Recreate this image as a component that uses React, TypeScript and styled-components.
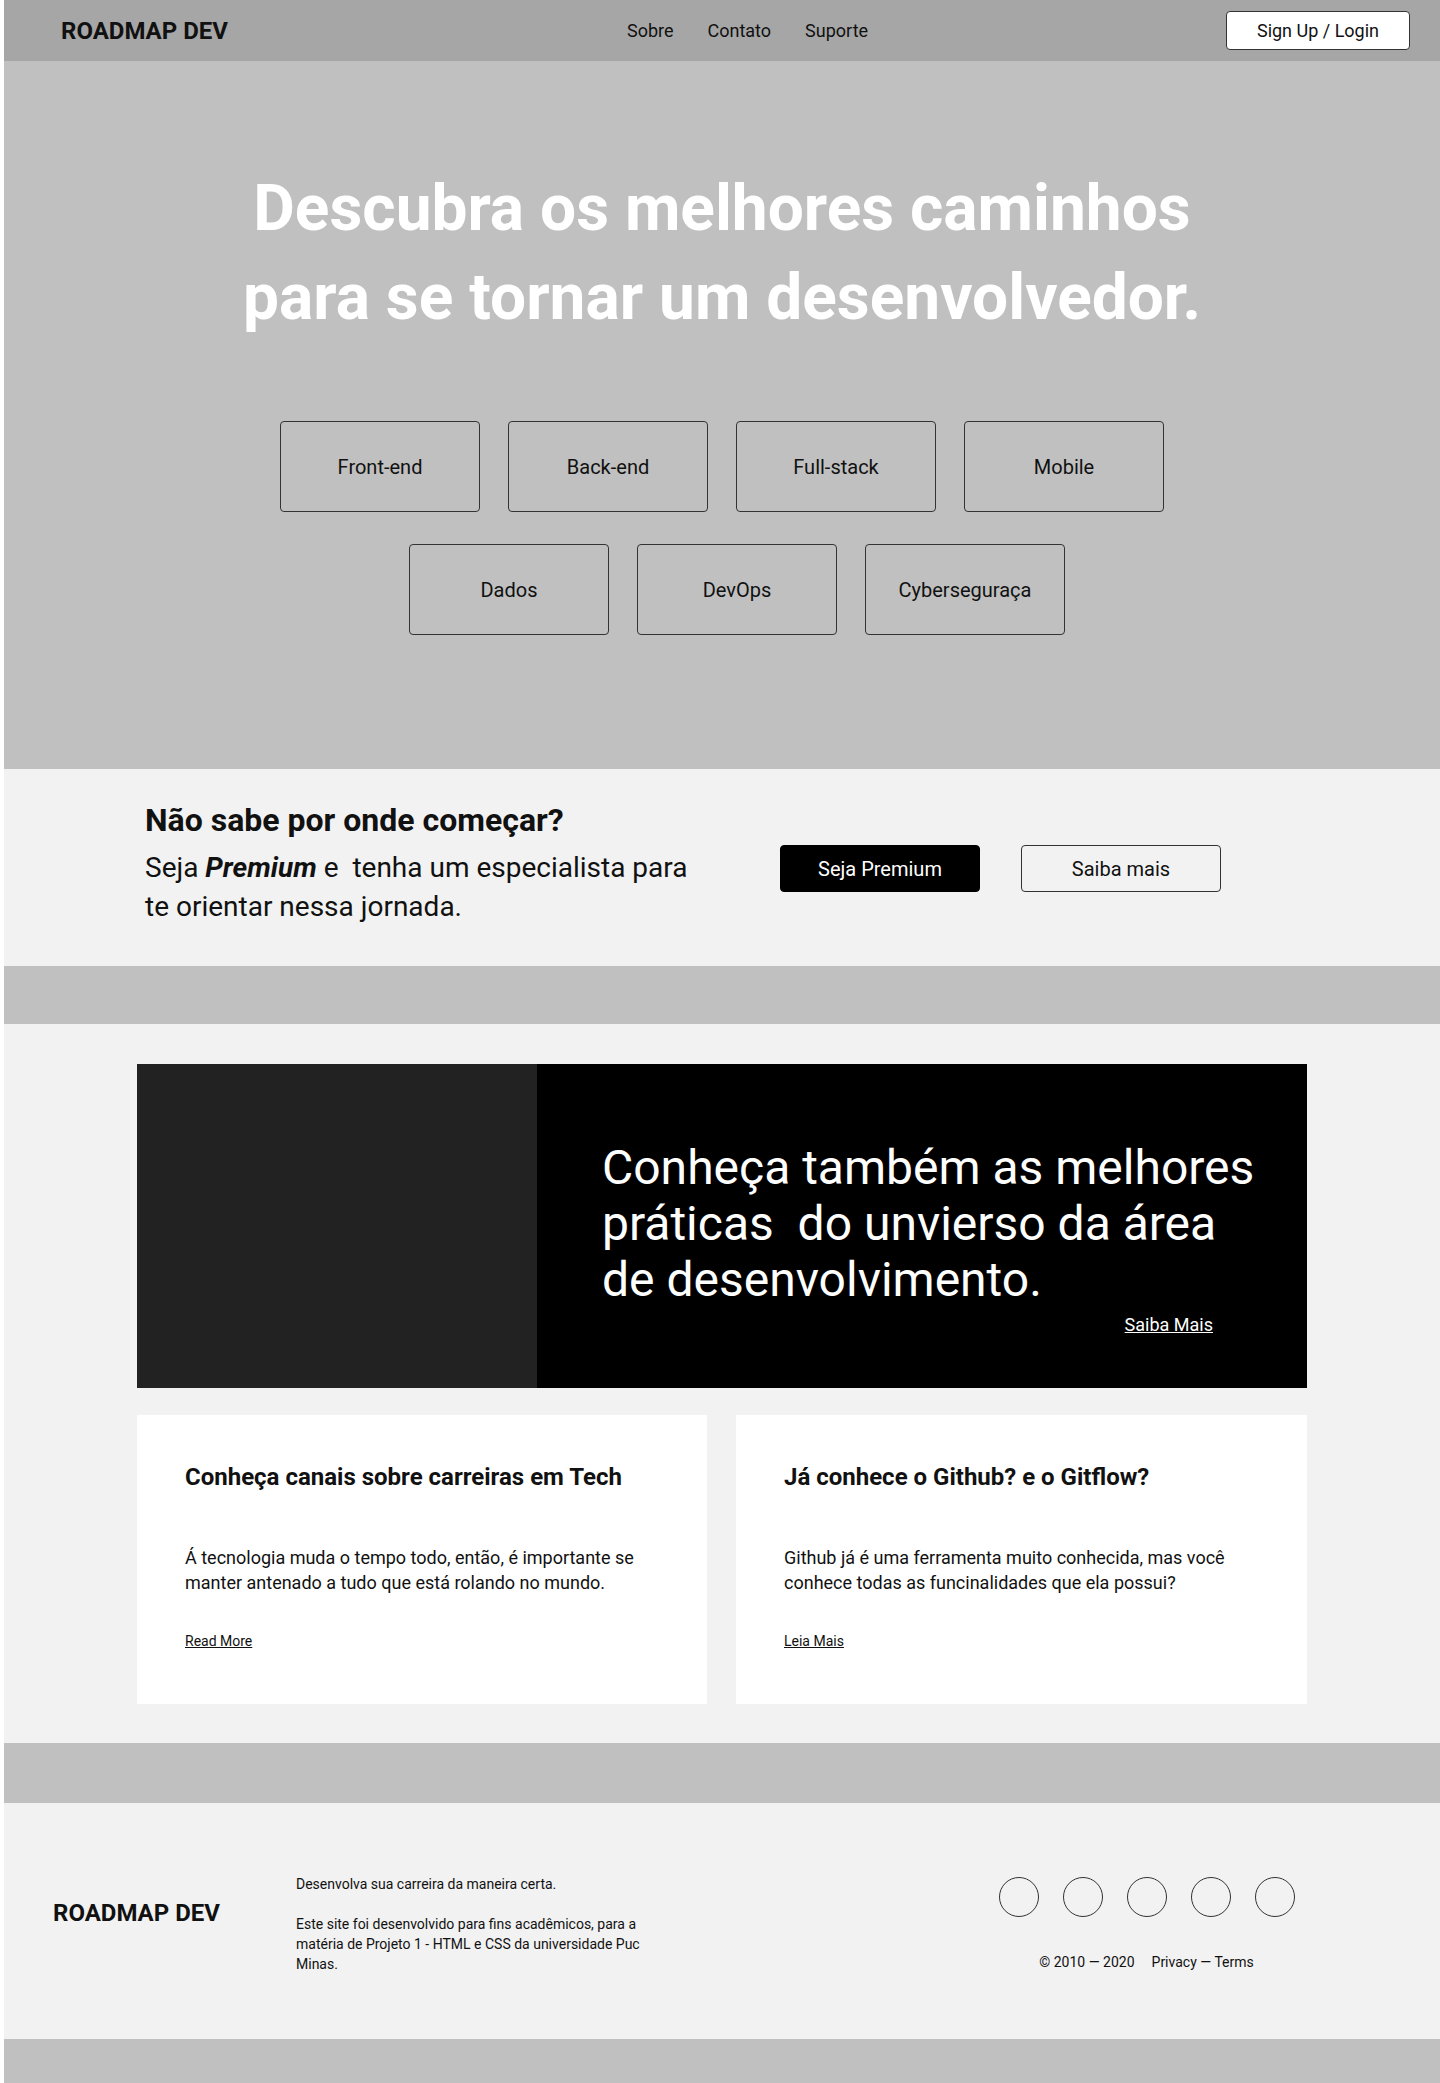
import React from "react";
import styled, { createGlobalStyle } from "styled-components";

const GlobalStyle = createGlobalStyle`
  * { box-sizing: border-box; }
  html, body { margin: 0; padding: 0; background: #ffffff; }
  body { font-family: Roboto, "Liberation Sans", Arial, sans-serif; color: #111; }
`;

const Page = styled.div`
  padding-left: 4px;
  display: flex;
  flex-direction: column;
`;

const Header = styled.header`
  height: 61px;
  background: #a6a6a6;
  display: flex;
  align-items: center;
  padding: 0 30px 0 57px;
`;

const Logo = styled.div`
  font-size: 24px;
  font-weight: 700;
  color: #111;
`;

const Nav = styled.nav`
  display: flex;
  gap: 34px;
  margin-left: 399px;
`;

const NavLink = styled.a`
  font-size: 18px;
  color: #111;
  text-decoration: none;
`;

const LoginButton = styled.button`
  margin-left: auto;
  width: 184px;
  height: 39px;
  background: #fff;
  border: 1px solid #333;
  border-radius: 4px;
  font-family: inherit;
  font-size: 18px;
  color: #111;
`;

const Hero = styled.section`
  background: #c0c0c0;
  height: 708px;
  padding-top: 103px;
  display: flex;
  flex-direction: column;
  align-items: center;
`;

const HeroTitle = styled.h1`
  margin: 0;
  font-size: 64px;
  line-height: 89px;
  font-weight: 700;
  color: #fff;
  text-align: center;
`;

const Tracks = styled.div`
  margin-top: 79px;
  display: flex;
  flex-direction: column;
  align-items: center;
  gap: 32px;
`;

const TrackRow = styled.div<{ $shift?: number }>`
  display: flex;
  gap: 28px;
  margin-left: ${(p) => p.$shift ?? 0}px;
`;

const TrackBox = styled.div`
  width: 200px;
  height: 91px;
  border: 1px solid #333;
  border-radius: 4px;
  display: flex;
  align-items: center;
  justify-content: center;
  font-size: 20px;
  color: #111;
`;

const Premium = styled.section`
  background: #f2f2f2;
  height: 197px;
  display: flex;
  align-items: center;
  padding-left: 141px;
`;

const PremiumText = styled.div`
  width: 635px;
  padding-bottom: 9px;
`;

const PremiumTitle = styled.h2`
  margin: 0 0 9px;
  font-size: 32px;
  line-height: 38px;
  font-weight: 700;
  color: #111;
`;

const PremiumSub = styled.p`
  margin: 0;
  max-width: 590px;
  font-size: 28px;
  line-height: 39px;
  color: #111;
  em { font-weight: 700; font-style: italic; }
`;

const ButtonGroup = styled.div`
  display: flex;
  gap: 41px;
  margin-top: 2px;
`;

const ActionButton = styled.button<{ $dark?: boolean }>`
  width: 200px;
  height: 47px;
  border-radius: 4px;
  border: 1px solid ${(p) => (p.$dark ? "#000" : "#333")};
  background: ${(p) => (p.$dark ? "#000" : "transparent")};
  color: ${(p) => (p.$dark ? "#fff" : "#111")};
  font-family: inherit;
  font-size: 20px;
`;

const Band = styled.div<{ $h: number }>`
  height: ${(p) => p.$h}px;
  background: #c0c0c0;
`;

const Content = styled.section`
  background: #f2f2f2;
  height: 719px;
  padding: 40px 133px 0 133px;
  display: flex;
  flex-direction: column;
  gap: 27px;
`;

const Banner = styled.div`
  height: 324px;
  display: flex;
`;

const BannerImage = styled.div`
  width: 400px;
  background: #222;
`;

const BannerBody = styled.div`
  flex: 1;
  background: #000;
  padding: 76px 36px 0 65px;
  display: flex;
  flex-direction: column;
`;

const BannerText = styled.p`
  margin: 0;
  font-size: 48px;
  line-height: 56px;
  color: #fff;
  white-space: pre-wrap;
`;

const BannerLink = styled.a`
  align-self: flex-end;
  margin-top: 6px;
  margin-right: 58px;
  font-size: 18px;
  color: #fff;
  text-decoration: underline;
`;

const Cards = styled.div`
  display: grid;
  grid-template-columns: 570px 571px;
  gap: 29px;
`;

const Card = styled.article`
  background: #fff;
  height: 289px;
  padding: 47px 48px 0;
`;

const CardTitle = styled.h3`
  margin: 0;
  font-size: 24px;
  line-height: 30px;
  font-weight: 700;
  color: #111;
`;

const CardText = styled.p`
  margin: 53px 0 0;
  font-size: 18px;
  line-height: 25px;
  color: #111;
  max-width: 460px;
`;

const CardLink = styled.a`
  display: block;
  margin-top: 38px;
  font-size: 14px;
  color: #111;
  text-decoration: underline;
`;

const Footer = styled.footer`
  background: #f2f2f2;
  height: 236px;
  display: flex;
  align-items: center;
  padding: 6px 146px 0 49px;
`;

const FooterBrand = styled.div`
  width: 243px;
  margin-bottom: 22px;
`;

const FooterText = styled.div`
  width: 350px;
  font-size: 14px;
  line-height: 20px;
  color: #111;
  p { margin: 0; }
  p + p { margin-top: 20px; }
`;

const FooterRight = styled.div`
  margin-left: auto;
  width: 295px;
  display: flex;
  flex-direction: column;
  align-items: center;
  gap: 36px;
`;

const Socials = styled.div`
  display: flex;
  gap: 24px;
`;

const SocialCircle = styled.span`
  width: 40px;
  height: 40px;
  border: 1px solid #333;
  border-radius: 50%;
`;

const Copyright = styled.div`
  font-size: 14px;
  line-height: 18px;
  color: #111;
  display: flex;
  gap: 17px;
`;

const tracksTop = ["Front-end", "Back-end", "Full-stack", "Mobile"];
const tracksBottom = ["Dados", "DevOps", "Cyberseguraça"];

export default function App() {
  return (
    <>
      <GlobalStyle />
      <Page>
        <Header>
          <Logo>ROADMAP DEV</Logo>
          <Nav>
            <NavLink>Sobre</NavLink>
            <NavLink>Contato</NavLink>
            <NavLink>Suporte</NavLink>
          </Nav>
          <LoginButton>Sign Up / Login</LoginButton>
        </Header>

        <Hero>
          <HeroTitle>
            Descubra os melhores caminhos
            <br />
            para se tornar um desenvolvedor.
          </HeroTitle>
          <Tracks>
            <TrackRow>
              {tracksTop.map((t) => (
                <TrackBox key={t}>{t}</TrackBox>
              ))}
            </TrackRow>
            <TrackRow $shift={30}>
              {tracksBottom.map((t) => (
                <TrackBox key={t}>{t}</TrackBox>
              ))}
            </TrackRow>
          </Tracks>
        </Hero>

        <Premium>
          <PremiumText>
            <PremiumTitle>Não sabe por onde começar?</PremiumTitle>
            <PremiumSub>
              Seja <em>Premium</em> e&nbsp; tenha um especialista para
              <br />
              te orientar nessa jornada.
            </PremiumSub>
          </PremiumText>
          <ButtonGroup>
            <ActionButton $dark>Seja Premium</ActionButton>
            <ActionButton>Saiba mais</ActionButton>
          </ButtonGroup>
        </Premium>

        <Band $h={58} />

        <Content>
          <Banner>
            <BannerImage />
            <BannerBody>
              <BannerText>
                {"Conheça também as melhores\npráticas  do unvierso da área\nde desenvolvimento."}
              </BannerText>
              <BannerLink>Saiba Mais</BannerLink>
            </BannerBody>
          </Banner>
          <Cards>
            <Card>
              <CardTitle>Conheça canais sobre carreiras em Tech</CardTitle>
              <CardText>
                Á tecnologia muda o tempo todo, então, é importante se manter antenado a tudo que está rolando no mundo.
              </CardText>
              <CardLink>Read More</CardLink>
            </Card>
            <Card>
              <CardTitle>Já conhece o Github? e o Gitflow?</CardTitle>
              <CardText>
                Github já é uma ferramenta muito conhecida, mas você conhece todas as funcinalidades que ela possui?
              </CardText>
              <CardLink>Leia Mais</CardLink>
            </Card>
          </Cards>
        </Content>

        <Band $h={60} />

        <Footer>
          <FooterBrand>
            <Logo>ROADMAP DEV</Logo>
          </FooterBrand>
          <FooterText>
            <p>Desenvolva sua carreira da maneira certa.</p>
            <p>
              Este site foi desenvolvido para fins acadêmicos, para a matéria de Projeto 1 - HTML e CSS da universidade Puc Minas.
            </p>
          </FooterText>
          <FooterRight>
            <Socials>
              {[0, 1, 2, 3, 4].map((i) => (
                <SocialCircle key={i} />
              ))}
            </Socials>
            <Copyright>
              <span>© 2010 — 2020</span>
              <span>Privacy — Terms</span>
            </Copyright>
          </FooterRight>
        </Footer>

        <Band $h={44} />
      </Page>
    </>
  );
}
